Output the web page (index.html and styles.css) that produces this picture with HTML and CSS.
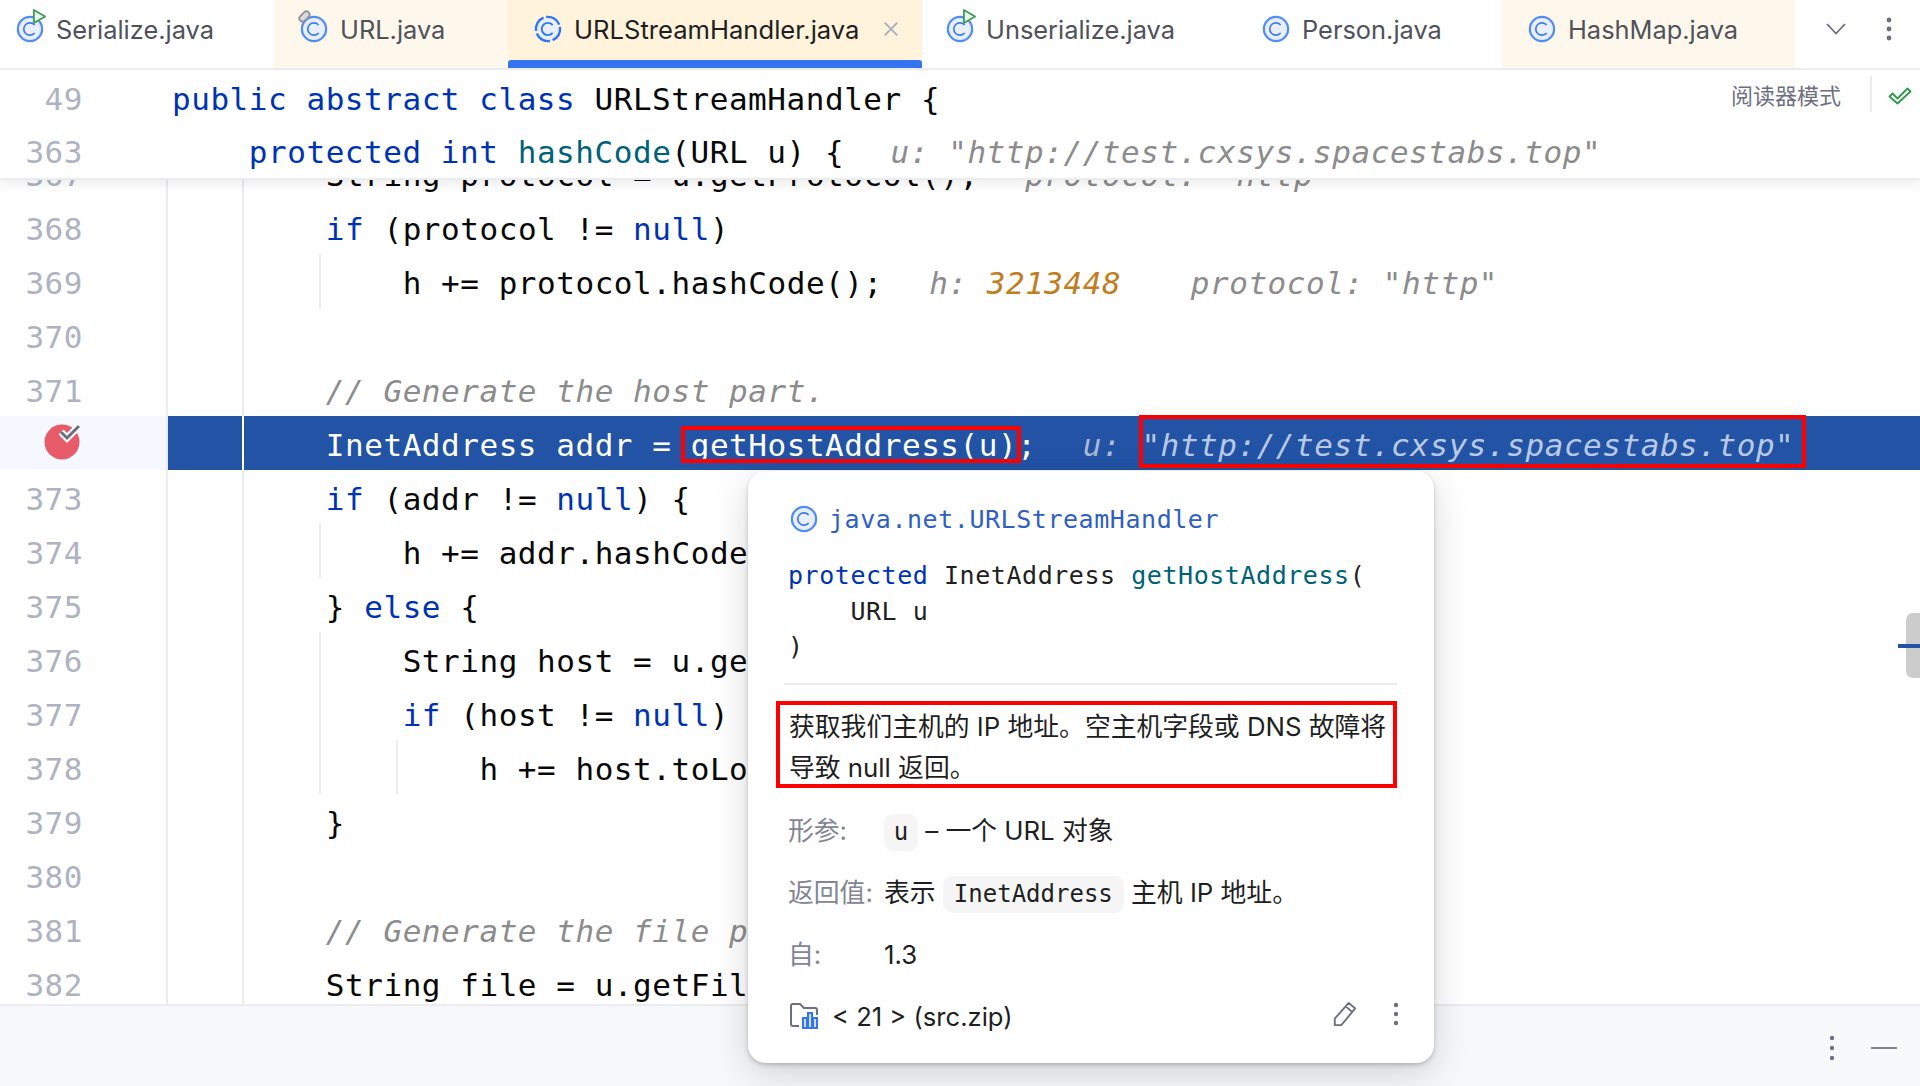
FILE: index.html
```html
<!DOCTYPE html>
<html lang="zh">
<head>
<meta charset="utf-8">
<title>URLStreamHandler.java</title>
<link rel="stylesheet" href="styles.css">
</head>
<body>
<svg class="defs" width="0" height="0">
  <symbol id="cls" viewBox="0 0 30 30">
    <circle cx="15" cy="15" r="13" fill="#e7effd" stroke="#528cf5" stroke-width="2.4"/>
    <path d="M20 10.800a6.600 6.600 0 1 0 0 8.400" fill="none" stroke="#3f78ea" stroke-width="1.800"/>
  </symbol>
  <symbol id="cls-open" viewBox="0 0 30 30">
    <circle cx="15" cy="15" r="13" fill="#e7effd" stroke="#3574f0" stroke-width="2.600" stroke-dasharray="17.400 3" transform="rotate(-10 15 15)"/>
    <path d="M20 10.800a6.600 6.600 0 1 0 0 8.400" fill="none" stroke="#3574f0" stroke-width="2"/>
  </symbol>
</svg>
<div class="app">
  <nav class="tabs">
    <div class="tab t1"><span class="ic"><svg class="cl"><use href="#cls"/></svg><svg class="badge" viewBox="0 0 16 18"><path d="M2 2l12 7-12 7z" fill="#eef7ef" stroke="#3f9e57" stroke-width="2" stroke-linejoin="round"/></svg></span><span>Serialize.java</span></div>
    <div class="tab t2 open"><span class="ic"><svg class="cl"><use href="#cls"/></svg><svg class="pin" viewBox="0 0 14 14"><rect x="1.500" y="4" width="11" height="6" rx="3" transform="rotate(-45 7 7)" fill="#d8d9dc" stroke="#8d8f96" stroke-width="1.600"/></svg></span><span>URL.java</span></div>
    <div class="tab t3 active"><span class="ic"><svg class="cl"><use href="#cls-open"/></svg></span><span class="tname">URLStreamHandler.java</span><svg class="close" viewBox="0 0 14 14"><path d="M1.500 1.500l11 11M12.500 1.500l-11 11" stroke="#a8adbd" stroke-width="1.600"/></svg></div>
    <div class="tab t4"><span class="ic"><svg class="cl"><use href="#cls"/></svg><svg class="badge" viewBox="0 0 16 18"><path d="M2 2l12 7-12 7z" fill="#eef7ef" stroke="#3f9e57" stroke-width="2" stroke-linejoin="round"/></svg></span><span>Unserialize.java</span></div>
    <div class="tab t5"><span class="ic"><svg class="cl"><use href="#cls"/></svg></span><span>Person.java</span></div>
    <div class="tab t6 open"><span class="ic"><svg class="cl"><use href="#cls"/></svg></span><span>HashMap.java</span></div>
    <div class="tab-actions">
      <svg class="chev" viewBox="0 0 20 12"><path d="M1 1l9 9.500L19 1" fill="none" stroke="#6c707e" stroke-width="1.800"/></svg>
      <svg class="vdots" viewBox="0 0 6 24"><circle cx="3" cy="3" r="2.400" fill="#6c707e"/><circle cx="3" cy="12" r="2.400" fill="#6c707e"/><circle cx="3" cy="21" r="2.400" fill="#6c707e"/></svg>
    </div>
  </nav>

  <main class="editor">
    <div class="lines">
      <div class="row"><div class="ln">367</div><div class="fold"></div><div class="code"><span>    String protocol = u.getProtocol();</span><span class="hint inlay">  protocol: "http"</span></div></div>
      <div class="row"><div class="ln">368</div><div class="fold"></div><div class="code"><span>    </span><span class="k">if</span><span> (protocol != </span><span class="k">null</span><span>)</span></div></div>
      <div class="row"><div class="ln">369</div><div class="fold"></div><div class="code g1"><span>        h += protocol.hashCode();</span><span class="hint inlay">  h: </span><span class="hint num">3213448</span><span class="hint inlay2">   protocol: "http"</span></div></div>
      <div class="row"><div class="ln">370</div><div class="fold"></div><div class="code"></div></div>
      <div class="row"><div class="ln">371</div><div class="fold"></div><div class="code"><span class="hint">    // Generate the host part.</span></div></div>
      <div class="row current"><div class="ln bp"><svg class="bpicon" viewBox="0 0 40 40"><circle cx="18" cy="22" r="17.500" fill="#e85b69"/><path d="M17 12l6 6 12-12" fill="none" stroke="#fff" stroke-width="7"/><path d="M17 12l6 6 12-12" fill="none" stroke="#6c707e" stroke-width="3"/></svg></div><div class="fold"></div><div class="code"><span>    InetAddress addr = </span><span class="mark m1">getHostAddress(u)</span><span>;</span><span class="chint inlay">  u: </span><span class="mark m2">"http://test.cxsys.spacestabs.top"</span></div></div>
      <div class="row"><div class="ln">373</div><div class="fold"></div><div class="code"><span>    </span><span class="k">if</span><span> (addr != </span><span class="k">null</span><span>) {</span></div></div>
      <div class="row"><div class="ln">374</div><div class="fold"></div><div class="code g1"><span>        h += addr.hashCode();</span></div></div>
      <div class="row"><div class="ln">375</div><div class="fold"></div><div class="code"><span>    } </span><span class="k">else</span><span> {</span></div></div>
      <div class="row"><div class="ln">376</div><div class="fold"></div><div class="code g1"><span>        String host = u.getHost();</span></div></div>
      <div class="row"><div class="ln">377</div><div class="fold"></div><div class="code g1"><span>        </span><span class="k">if</span><span> (host != </span><span class="k">null</span><span>)</span></div></div>
      <div class="row"><div class="ln">378</div><div class="fold"></div><div class="code g1 g2"><span>            h += host.toLowerCase().hashCode();</span></div></div>
      <div class="row"><div class="ln">379</div><div class="fold"></div><div class="code"><span>    }</span></div></div>
      <div class="row"><div class="ln">380</div><div class="fold"></div><div class="code"></div></div>
      <div class="row"><div class="ln">381</div><div class="fold"></div><div class="code"><span class="hint">    // Generate the file part.</span></div></div>
      <div class="row"><div class="ln">382</div><div class="fold"></div><div class="code"><span>    String file = u.getFile();</span></div></div>
    </div>

    <div class="sticky">
      <div class="srow s1"><div class="ln">49</div><div class="scode"><span class="k">public abstract class</span><span> URLStreamHandler {</span></div></div>
      <div class="srow s2"><div class="ln">363</div><div class="scode"><span>    </span><span class="k">protected int</span><span> </span><span class="fn">hashCode</span><span>(URL u) {</span><span class="hint inlay">  u: "http://test.cxsys.spacestabs.top"</span></div></div>
      <div class="reader">
        <span>阅读器模式</span>
        <i class="rdiv"></i>
        <svg class="check" viewBox="0 0 24 18"><path d="M1.500 9.500L4.500 6.500 9.500 11.500 19.500 1.500 22.500 4.500 9.500 16.500z" fill="none" stroke="#2d9a4c" stroke-width="1.800" stroke-linejoin="round"/></svg>
      </div>
    </div>

    <div class="scroll"><i class="mark-line"></i></div>
  </main>

  <footer class="panel">
    <svg class="pdots" viewBox="0 0 6 26"><circle cx="3" cy="3" r="2.200" fill="#6c707e"/><circle cx="3" cy="13" r="2.200" fill="#6c707e"/><circle cx="3" cy="23" r="2.200" fill="#6c707e"/></svg>
    <i class="pdash"></i>
  </footer>

  <aside class="doc">
    <div class="doc-head"><svg class="cl"><use href="#cls"/></svg><span>java.net.URLStreamHandler</span></div>
    <div class="sig"><div><span class="k">protected</span> InetAddress <span class="fn">getHostAddress</span>(</div><div>    URL u</div><div>)</div></div>
    <div class="sep"></div>
    <p class="desc">获取我们主机的 IP 地址。空主机字段或 DNS 故障将导致 null 返回。</p>
    <div class="kv"><span class="key">形参:</span><span class="val"><code class="chip chip-u">u</code> <span class="dash">–</span> 一个 URL 对象</span></div>
    <div class="kv"><span class="key">返回值:</span><span class="val">表示 <code class="chip">InetAddress</code> 主机 IP 地址。</span></div>
    <div class="kv"><span class="key">自:</span><span class="val">1.3</span></div>
    <div class="doc-foot">
      <svg class="folder" viewBox="0 0 30 28"><path d="M9 24H3a2 2 0 0 1-2-2V4a2 2 0 0 1 2-2h7l4 4h11a2 2 0 0 1 2 2v5" fill="none" stroke="#6c707e" stroke-width="2"/><path d="M13 16h4v10h-4zM18 11h4v15h-4zM23 16h4v10h-4z" fill="#cfe0fd" stroke="#3574f0" stroke-width="2"/></svg>
      <span class="src">&lt; 21 &gt; (src.zip)</span>
      <span class="spacer"></span>
      <svg class="pencil" viewBox="0 0 28 30"><path d="M3 27v-7L18 3l7 6L10 27zM15 7l7 6" fill="none" stroke="#6c707e" stroke-width="2" stroke-linejoin="round"/></svg>
      <svg class="fdots" viewBox="0 0 6 24"><circle cx="3" cy="3" r="2.200" fill="#6c707e"/><circle cx="3" cy="12" r="2.200" fill="#6c707e"/><circle cx="3" cy="21" r="2.200" fill="#6c707e"/></svg>
    </div>
  </aside>
</div>
</body>
</html>
```

FILE: styles.css
```css
* { box-sizing: border-box; }
html, body { margin: 0; padding: 0; height: 100%; background: #fff; }
body { font-family: "Inter", "Noto Sans CJK SC", sans-serif; overflow: hidden; }
.defs { position: absolute; }
.app { position: relative; width: 1920px; height: 1086px; display: flex; flex-direction: column; overflow: hidden; }

/* tabs */
.tabs { flex: none; height: 70px; display: flex; border-bottom: 2px solid #ebecf0; font-size: 25.4px; color: #50525a; }
.tab { display: flex; align-items: center; height: 68px; padding-left: 26px; padding-bottom: 10px; gap: 12px; flex: none; }
.t1 { width: 274px; padding-left: 16px; }
.t2 { width: 234px; }
.t3 { width: 414px; background: #fff3dc; color: #1e1f22; position: relative; font-size: 25.600px; }
.t3::after { content: ""; position: absolute; left: 0; right: 0; bottom: 0; height: 8px; background: #3574f0; border-radius: 3px 3px 0 0; }
.t4 { width: 304px; padding-left: 24px; }
.t5 { width: 276px; padding-left: 36px; }
.t6 { width: 293px; }
.open { background: #fef8ec; }
.tname { margin-right: 11px; }
.ic { position: relative; width: 28px; height: 28px; display: block; flex: none; }
.cl { width: 28px; height: 28px; display: block; }
.badge { position: absolute; left: 16px; top: -7px; width: 15px; height: 17px; }
.pin { position: absolute; left: -3px; top: -6px; width: 15px; height: 15px; }
.close { width: 16px; height: 16px; flex: none; margin-top: -1px; }
.tab-actions { display: flex; align-items: center; padding-left: 31px; padding-bottom: 10px; gap: 40px; height: 68px; }
.chev { width: 20px; height: 12px; }
.vdots { width: 6px; height: 24px; }

/* editor */
.editor { flex: none; height: 934px; position: relative; overflow: hidden; font-family: "DejaVu Sans Mono", "Liberation Mono", monospace; font-size: 31px; letter-spacing: .54px; color: #080808; }
.lines { margin-top: 76px; }
.row { display: flex; height: 54px; }
.ln { flex: none; width: 168px; padding: 5px 83px 0 0; text-align: right; line-height: 49px; color: #aeb3c2; border-right: 2px solid #ebecf0; }
.fold { flex: none; width: 76px; border-right: 2px solid #ebecf0; }
.code { flex: 1; min-width: 0; display: flex; align-items: center; padding: 5px 0 0 5px; white-space: pre; line-height: 49px; }
.code:empty { padding: 0; }
.g1 { background: linear-gradient(#ebecf0, #ebecf0) 75px 0 / 2px 100% no-repeat; }
.g2 { background: linear-gradient(#ebecf0, #ebecf0) 75px 0 / 2px 100% no-repeat, linear-gradient(#ebecf0, #ebecf0) 152px 0 / 2px 100% no-repeat; }
.k { color: #0033b3; }
.fn { color: #00627a; }
.hint { color: #8c8c8c; font-style: italic; }
.num { color: #c27d1f; }
.inlay { margin-left: 8px; }
.inlay2 { margin-left: 12px; }

.current .ln { background: #f5f8fe; position: relative; padding: 0; }
.current .fold { background: #2253a5; border-right-color: #fff; }
.current .code { background: #2253a5; color: #fff; }
.chint { color: #a9b9d6; font-style: italic; }
.bpicon { position: absolute; left: 44px; top: 4px; width: 40px; height: 40px; }
.mark { outline: 4px solid #f00; }
.m1 { height: 29px; line-height: 31px; padding-left: 6px; margin: 0 0 2px -6px; }
.m2 { height: 49px; line-height: 57px; padding-right: 10px; margin: 0 0 8px 1px; font-style: italic; color: #b9c8e3; outline-offset: -2px; }

/* sticky lines */
.sticky { position: absolute; left: 0; right: 0; top: 0; height: 110px; padding-top: 3px; background: #fff; border-bottom: 2px solid #ebecf0; box-shadow: 0 4px 12px rgba(0, 0, 0, .08); }
.srow { display: flex; height: 53px; white-space: pre; line-height: 53px; }
.srow .ln { width: 83px; padding: 0; border: 0; line-height: 53px; }
.scode { padding-left: 89px; }
.reader { position: absolute; top: 6px; right: 12px; height: 36px; display: flex; align-items: center; font-family: "Noto Sans CJK SC", sans-serif; font-size: 22px; letter-spacing: 0; color: #6c707e; }
.rdiv { width: 2px; height: 36px; background: #ebecf0; margin: 0 16px 0 29px; }
.check { width: 24px; height: 18px; margin-top: 4px; margin-right: -4px; }

.scroll { position: absolute; right: 0; top: 543px; width: 14px; height: 65px; background: #ccc; border-radius: 7px 0 0 7px; }
.mark-line { position: absolute; right: 0; top: 31px; width: 22px; height: 4px; background: #2253a5; }

/* bottom panel */
.panel { flex: 1; background: #f7f8fa; border-top: 2px solid #ebecf0; display: flex; justify-content: flex-end; align-items: center; padding: 3px 23px 0 0; gap: 36px; }
.pdots { width: 6px; height: 26px; }
.pdash { width: 26px; height: 2px; background: #7f8290; }

/* doc popup */
.doc { position: absolute; left: 748px; top: 471px; width: 686px; height: 592px; background: #fff; border-radius: 18px; box-shadow: 0 2px 4px rgba(0,0,0,.2), 0 10px 36px rgba(0,0,0,.16); padding: 30px 35px 0 40px; font-size: 25.800px; color: #1e1f22; }
.doc-head { display: flex; align-items: center; gap: 11px; height: 36px; font-family: "DejaVu Sans Mono", monospace; font-size: 25px; letter-spacing: .55px; color: #2f5fc4; }
.doc-head .cl { margin-left: 2px; flex: none; }
.sig { margin-top: 21px; height: 106px; font-family: "DejaVu Sans Mono", monospace; font-size: 25px; letter-spacing: .55px; line-height: 35.500px; white-space: pre; }
.sep { height: 2px; margin: 19px 0 0 -4px; width: 613px; background: #ebecf0; }
.desc { margin: 16px 0 0 -12px; width: 621px; height: 87px; border: 4px solid #f00; padding: 1px 0 0 9px; line-height: 41px; }
.kv { display: flex; align-items: baseline; height: 62px; line-height: 62px; }
.desc + .kv { margin-top: 12px; }
.key { width: 96px; flex: none; color: #818594; }
.val { white-space: pre-wrap; }
.chip { display: inline-block; height: 37px; line-height: 37px; padding: 0 11px; background: #f5f5f5; border-radius: 9px; font-family: "DejaVu Sans Mono", monospace; font-size: 24px; }
.chip-u { width: 34px; padding: 0; text-align: center; }
.doc-foot { display: flex; align-items: center; height: 60px; }
.folder { width: 30px; height: 28px; margin: 0 12px 0 2px; flex: none; }
.src { font-size: 25.600px; }
.spacer { flex: 1; }
.pencil { width: 26px; height: 28px; margin-right: 35px; margin-top: -5px; }
.fdots { width: 6px; height: 24px; margin-top: -5px; }
```
